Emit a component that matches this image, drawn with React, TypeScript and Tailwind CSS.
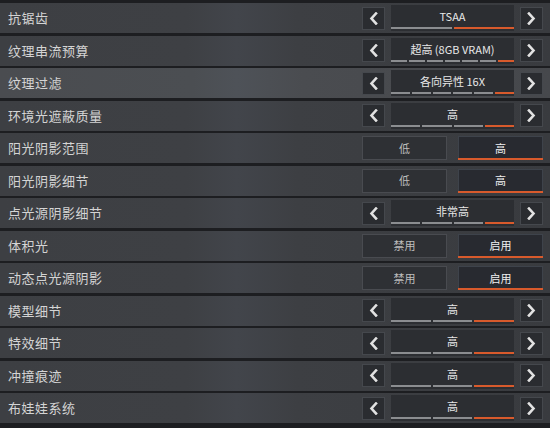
import React from "react";

type Row =
  | { label: string; kind: "step"; value: string; segments: number; highlight?: boolean }
  | { label: string; kind: "toggle"; options: [string, string]; selected: number };

const rows: Row[] = [
  { label: "抗锯齿", kind: "step", value: "TSAA", segments: 2 },
  { label: "纹理串流预算", kind: "step", value: "超高 (8GB VRAM)", segments: 7 },
  { label: "纹理过滤", kind: "step", value: "各向异性 16X", segments: 6, highlight: true },
  { label: "环境光遮蔽质量", kind: "step", value: "高", segments: 4 },
  { label: "阳光阴影范围", kind: "toggle", options: ["低", "高"], selected: 1 },
  { label: "阳光阴影细节", kind: "toggle", options: ["低", "高"], selected: 1 },
  { label: "点光源阴影细节", kind: "step", value: "非常高", segments: 4 },
  { label: "体积光", kind: "toggle", options: ["禁用", "启用"], selected: 1 },
  { label: "动态点光源阴影", kind: "toggle", options: ["禁用", "启用"], selected: 1 },
  { label: "模型细节", kind: "step", value: "高", segments: 3 },
  { label: "特效细节", kind: "step", value: "高", segments: 3 },
  { label: "冲撞痕迹", kind: "step", value: "高", segments: 3 },
  { label: "布娃娃系统", kind: "step", value: "高", segments: 3 },
];

const Chevron = ({ dir }: { dir: "left" | "right" }) => (
  <svg width="9" height="13" viewBox="0 0 9 13" fill="none">
    <polyline
      points={dir === "left" ? "7,1.5 2.5,6.5 7,11.5" : "2,1.5 6.5,6.5 2,11.5"}
      stroke="#e2e2e2"
      strokeWidth="2.6"
      strokeLinecap="square"
    />
  </svg>
);

const ArrowButton = ({ dir }: { dir: "left" | "right" }) => (
  <div className="w-[23px] h-[23px] flex items-center justify-center bg-[#2a2c30] border border-[#45484d]">
    <Chevron dir={dir} />
  </div>
);

function Stepper({ value, segments }: { value: string; segments: number }) {
  return (
    <div className="flex items-center">
      <ArrowButton dir="left" />
      <div className="ml-[6px] w-[123px] h-[26px] bg-[#2c2e32] relative flex items-start justify-center pt-[4px]">
        <span className="text-[11px] leading-[14px] text-[#e8e8e8]">{value}</span>
        <div className="absolute left-0 right-0 bottom-[2px] flex gap-[2px] h-[2px]">
          {Array.from({ length: segments }).map((_, i) => (
            <div
              key={i}
              className={`flex-1 ${i === segments - 1 ? "bg-[#d85a2c]" : "bg-[#8b8d90]"}`}
            />
          ))}
        </div>
      </div>
      <div className="ml-[6px]">
        <ArrowButton dir="right" />
      </div>
    </div>
  );
}

function Toggle({ options, selected }: { options: [string, string]; selected: number }) {
  return (
    <div className="flex gap-[11px]">
      {options.map((o, i) => (
        <div
          key={o}
          className={`w-[85px] h-[24px] relative flex items-center justify-center border ${
            i === selected ? "bg-[#282a30] border-[#3e434b]" : "bg-[#2e3034] border-[#494b50]"
          }`}
        >
          <span className={`text-[11px] ${i === selected ? "text-[#f0f0f0]" : "text-[#bdbdbd]"}`}>{o}</span>
          {i === selected && <div className="absolute left-[-1px] right-[-1px] bottom-[-1px] h-[2px] bg-[#d85a2c]" />}
        </div>
      ))}
    </div>
  );
}

export default function App() {
  return (
    <div
      className="w-[550px] h-[428px] bg-[#1d1e21] pt-[3px] flex flex-col gap-[2.5px] overflow-hidden"
      style={{ fontFamily: '"Noto Sans CJK SC", "Noto Sans", sans-serif' }}
    >
      {rows.map((r) => {
        const hl = r.kind === "step" && r.highlight;
        return (
          <div
            key={r.label}
            className={`h-[30px] shrink-0 flex items-center justify-between pl-[8px] pr-[7px] ${
              hl
                ? "bg-[linear-gradient(90deg,#4a4c50_0%,#4b4e52_35%,#4e5258_43%,#4a4c50_55%,#46484c_100%)]"
                : "bg-[linear-gradient(90deg,#3d3f43_0%,#3e4044_34%,#42454b_43%,#3d3f43_54%,#393b3f_100%)]"
            }`}
          >
            <span className="text-[13px] text-[#d4d4d4] tracking-[0.5px]">{r.label}</span>
            {r.kind === "step" ? (
              <Stepper value={r.value} segments={r.segments} />
            ) : (
              <Toggle options={r.options} selected={r.selected} />
            )}
          </div>
        );
      })}
    </div>
  );
}
